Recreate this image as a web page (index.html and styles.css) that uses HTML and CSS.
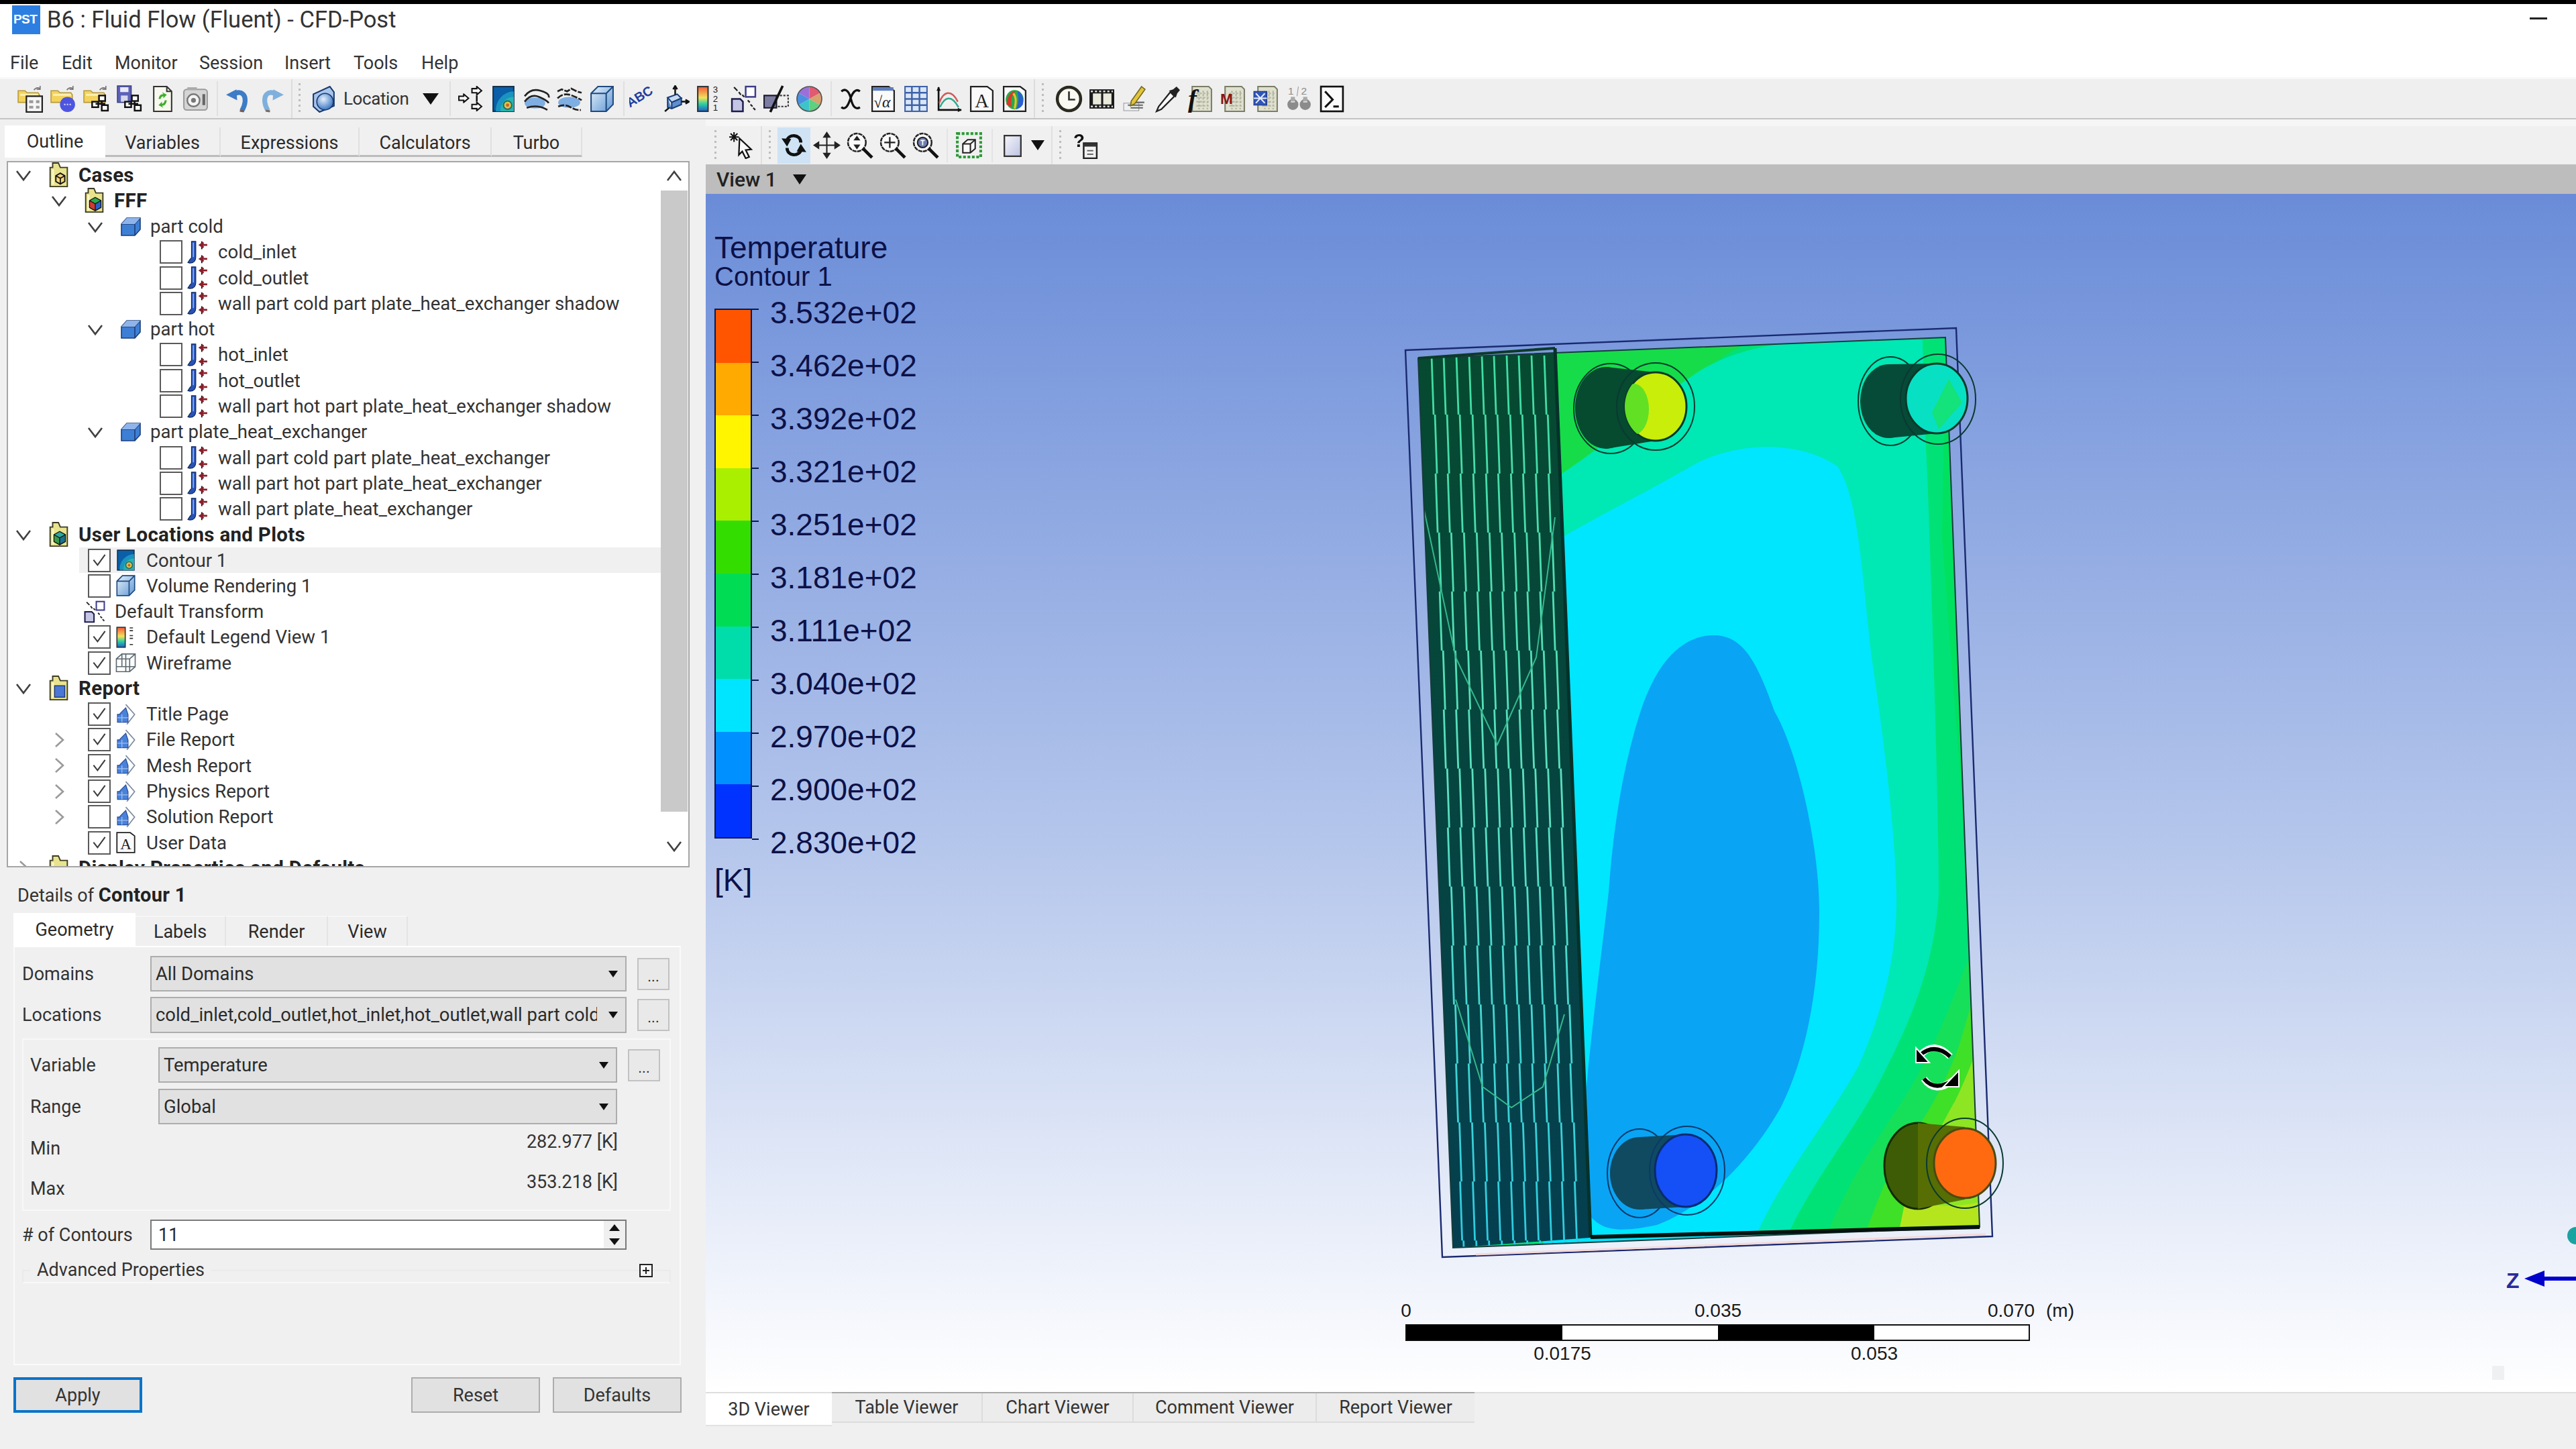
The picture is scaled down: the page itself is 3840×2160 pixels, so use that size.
FILE: index.html
```html
<!DOCTYPE html>
<html lang="en">
<head>
<meta charset="utf-8">
<title>B6 : Fluid Flow (Fluent) - CFD-Post</title>
<link rel="stylesheet" href="styles.css">
</head>
<body>
<svg class="sprite" xmlns="http://www.w3.org/2000/svg">
  <defs>
    <linearGradient id="gCube" x1="0" y1="0" x2="1" y2="1"><stop offset="0" stop-color="#e6f1fb"/><stop offset="1" stop-color="#5f97d3"/></linearGradient>
    <linearGradient id="gLeg" x1="0" y1="0" x2="0" y2="1"><stop offset="0" stop-color="#f25a3a"/><stop offset=".45" stop-color="#f4e05a"/><stop offset=".7" stop-color="#2fd0a0"/><stop offset="1" stop-color="#1a5fd0"/></linearGradient>
    <linearGradient id="gView" x1="0" y1="0" x2="1" y2="1"><stop offset="0" stop-color="#f6f6fb"/><stop offset="1" stop-color="#bcc3e2"/></linearGradient>
    <radialGradient id="gBall" cx=".4" cy=".35" r=".7"><stop offset="0" stop-color="#e5f0fc"/><stop offset="1" stop-color="#2f6ec0"/></radialGradient>
  </defs>
  <symbol id="folder" viewBox="0 0 40 40"><path d="M1 8h10l3 3h16l2 3v11H1z" fill="#f3d35c" stroke="#b79a38" stroke-width="1.5"/><path d="M4 14h26" stroke="#fbeeb0" stroke-width="3"/><path d="M24 7q4-5 9-2M33 1v5h-5" fill="none" stroke="#777" stroke-width="1.6"/></symbol>
  <symbol id="nodes" viewBox="0 0 40 40"><g fill="#fff" stroke="#111" stroke-width="2.4"><rect x="23" y="15" width="9" height="8"/><rect x="13" y="24" width="9" height="8"/><rect x="27" y="29" width="9" height="8"/><path d="M27 23v4h-9M27 27h4v2" fill="none"/></g></symbol>
  <symbol id="i-open" viewBox="0 0 40 40"><use href="#folder"/><rect x="13" y="16" width="23" height="23" fill="#f7f7f7" stroke="#222" stroke-width="2.2"/><path d="M17 22h6v4h-6zM27 22h5v4h-5zM17 30h6v4h-6zM27 30h5v4h-5z" fill="#9a9a9a"/></symbol>
  <symbol id="i-openb" viewBox="0 0 40 40"><use href="#folder"/><circle cx="25" cy="28" r="11" fill="#4d55e0"/><path d="M20 28h2M24 28h2M28 28h2" stroke="#dfe0ff" stroke-width="2"/></symbol>
  <symbol id="i-openn" viewBox="0 0 40 40"><use href="#folder"/><use href="#nodes"/></symbol>
  <symbol id="i-saven" viewBox="0 0 40 40"><rect x="2" y="1" width="20" height="24" fill="#5d62b8" stroke="#39407e" stroke-width="1.5"/><rect x="6" y="3" width="12" height="7" fill="#e9eaf8"/><rect x="7" y="15" width="10" height="9" fill="#d5d7ee"/><use href="#nodes"/></symbol>
  <symbol id="i-refresh" viewBox="0 0 40 40"><path d="M7 2h19l7 7v29H7z" fill="#f8f8ee" stroke="#333" stroke-width="2"/><path d="M26 2v7h7" fill="none" stroke="#333" stroke-width="2"/><path d="M14 20q1-7 7-7l-2-3 7 4-5 5v-3q-3 0-4 4zM26 22q-1 8-7 8l2 3-7-4 5-5v3q3 0 4-5z" fill="#3eae2e"/></symbol>
  <symbol id="i-cam" viewBox="0 0 40 40"><rect x="3" y="6" width="34" height="30" rx="4" fill="#d5d5d5" stroke="#9c9c9c" stroke-width="2"/><circle cx="17" cy="22" r="9" fill="#f4f4f4" stroke="#777" stroke-width="2.4"/><circle cx="17" cy="22" r="3.5" fill="#777"/><rect x="30" y="13" width="4" height="16" fill="#666"/><rect x="8" y="3" width="14" height="4" fill="#aaa"/></symbol>
  <symbol id="i-undo" viewBox="0 0 40 40"><path d="M12 14C26 4 36 18 25 37" fill="none" stroke="#3d7cc6" stroke-width="7"/><path d="M2 14l15-8 1 16z" fill="#3d7cc6"/><path d="M22 37l6 1" stroke="#7a5a50" stroke-width="3"/></symbol>
  <symbol id="i-redo" viewBox="0 0 40 40"><path d="M28 14C14 4 4 18 15 37" fill="none" stroke="#7fb0dc" stroke-width="7"/><path d="M38 14l-15-8-1 16z" fill="#7fb0dc"/><path d="M12 37l6 1" stroke="#7a6a60" stroke-width="3"/></symbol>
  <symbol id="i-loc" viewBox="0 0 40 40"><path d="M4 13L28 2l6 8v20L13 39 4 31z" fill="#a7c4ea" stroke="#17386e" stroke-width="2"/><circle cx="21" cy="24" r="12" fill="url(#gBall)" stroke="#17386e" stroke-width="1.5"/></symbol>
  <symbol id="arw" viewBox="0 0 16 14"><path d="M1 4h7V1l7 6-7 6v-3H1z" fill="#fff" stroke="#111" stroke-width="2"/></symbol>
  <symbol id="i-xf" viewBox="0 0 40 40"><use href="#arw" x="20" y="1" width="18" height="14"/><use href="#arw" x="1" y="12" width="18" height="14"/><use href="#arw" x="20" y="24" width="18" height="14"/><path d="M29 15v9" stroke="#111" stroke-width="2.4"/></symbol>
  <symbol id="i-contour" viewBox="0 0 40 40"><rect x="5" y="2" width="30" height="36" fill="#0a5fa8" stroke="#12304f" stroke-width="2"/><path d="M35 9A27 27 0 0 0 9 38h26z" fill="#1a93c0"/><path d="M35 17A19 19 0 0 0 16 38h19z" fill="#25b4b0"/><circle cx="26" cy="29" r="6" fill="#d8c84a" stroke="#2a6a6a" stroke-width="2"/><circle cx="26" cy="29" r="2.4" fill="#d0602a"/></symbol>
  <symbol id="i-stream" viewBox="0 0 40 40"><ellipse cx="18" cy="26" rx="15" ry="8" fill="#7eaee2"/><path d="M3 16Q12 4 26 8T38 18M3 24Q12 12 24 17T38 26M6 33Q14 30 22 31T36 36" fill="none" stroke="#222" stroke-width="2.6"/></symbol>
  <symbol id="i-stream2" viewBox="0 0 40 40"><ellipse cx="20" cy="25" rx="16" ry="8" fill="#7eaee2"/><path d="M3 9l6-3 8 3 6-4 8 4 7 2M3 19Q12 10 24 15T38 22M4 31Q14 27 22 32T37 36" fill="none" stroke="#222" stroke-width="2.6" stroke-dasharray="9 2"/></symbol>
  <symbol id="i-cube" viewBox="0 0 40 40"><path d="M4 12L14 2h22v26L26 38H4z" fill="url(#gCube)" stroke="#1d4a80" stroke-width="2"/><path d="M4 12h22v26M26 12L36 2" fill="none" stroke="#1d4a80" stroke-width="2"/></symbol>
  <symbol id="i-axisbox" viewBox="0 0 40 40"><path d="M8 18l14-5 6 6-14 6z" fill="#c7d9f2" stroke="#1a3f7a" stroke-width="2"/><path d="M8 18v14l6 2 14-6V19l-14 6v9" fill="#5f8fcc" stroke="#1a3f7a" stroke-width="2"/><path d="M19 14V2M16 6l3-5 3 5M28 24h10M34 21l5 3-5 3M10 33l-6 5" fill="none" stroke="#111" stroke-width="2.4"/></symbol>
  <symbol id="i-legbar" viewBox="0 0 40 40"><rect x="4" y="2" width="15" height="36" fill="url(#gLeg)" stroke="#333" stroke-width="2"/></symbol>
  <symbol id="i-transform" viewBox="0 0 40 40"><rect x="23" y="2" width="14" height="15" fill="#fff" stroke="#3c3c8a" stroke-width="2.4"/><path d="M3 20h12l4 4v14H3z" fill="#c5c5e4" stroke="#1c1c4c" stroke-width="2.4"/><path d="M6 3l5 5M13 10l3 4M18 14l3 3M26 22l3 3M30 28l3 3M34 33l3 3" stroke="#222" stroke-width="2.2"/></symbol>
  <symbol id="i-clip" viewBox="0 0 40 40"><path d="M2 15h18v18H2z" fill="#7d7da3" stroke="#1b1b30" stroke-width="2"/><path d="M20 15h17v16H20" fill="none" stroke="#333" stroke-width="2" stroke-dasharray="3 2"/><path d="M29 1L11 39" stroke="#111" stroke-width="3.6"/></symbol>
  <symbol id="i-wheel" viewBox="0 0 40 40"><path d="M20 20V2a18 18 0 0 1 16 9z" fill="#e05a70"/><path d="M20 20l16-9a18 18 0 0 1 0 18z" fill="#d9a070"/><path d="M20 20l16 9a18 18 0 0 1-16 9z" fill="#5fcf80"/><path d="M20 20v18a18 18 0 0 1-16-9z" fill="#3cc5c8"/><path d="M20 20L4 29a18 18 0 0 1 0-18z" fill="#4a90e0"/><path d="M20 20L4 11a18 18 0 0 1 16-9z" fill="#9a70d8"/><circle cx="20" cy="20" r="18" fill="none" stroke="#555" stroke-width="1.6"/></symbol>
  <symbol id="i-expr" viewBox="0 0 40 40"><path d="M7 9c7-6 12 2 14 11s6 17 13 12M34 9c-6-5-11 2-14 11S13 37 7 32" fill="none" stroke="#111" stroke-width="3.2"/></symbol>
  <symbol id="page" viewBox="0 0 40 40"><path d="M4 2h24l8 6v30H4z" fill="#fafafa" stroke="#222" stroke-width="2.2"/></symbol>
  <symbol id="i-table" viewBox="0 0 40 40"><rect x="4" y="2" width="32" height="36" fill="#d9e6f7" stroke="#3f62a8" stroke-width="2"/><path d="M14 2v36M25 2v36M4 11h32M4 20h32M4 29h32" stroke="#3f62a8" stroke-width="2.4"/></symbol>
  <symbol id="i-chart" viewBox="0 0 40 40"><path d="M5 3v33h33" fill="none" stroke="#111" stroke-width="2.6"/><path d="M2 8l3-6 3 6M33 33l6 3-6 3" fill="#111"/><path d="M6 26C12 8 24 6 33 24" fill="none" stroke="#d05a5a" stroke-width="2.4"/><path d="M7 32C14 16 24 14 34 32" fill="none" stroke="#2fa98e" stroke-width="2.4"/></symbol>
  <symbol id="i-rainbow" viewBox="0 0 40 40"><use href="#page"/><ellipse cx="20" cy="21" rx="13" ry="14" fill="#29a84a"/><path d="M8 28Q10 10 22 8q-10 10-6 24z" fill="#d83a2a"/><path d="M24 8q10 4 8 20-4 6-10 7 6-10 2-27z" fill="#2a5fd8"/><path d="M18 12q6 6 2 22" stroke="#e9c22a" stroke-width="3" fill="none"/></symbol>
  <symbol id="i-clock" viewBox="0 0 40 40"><circle cx="20" cy="20" r="17" fill="#fafaf2" stroke="#2a2a20" stroke-width="4.4"/><path d="M20 9v12h9" fill="none" stroke="#333" stroke-width="2.6"/></symbol>
  <symbol id="i-film" viewBox="0 0 40 40"><rect x="2" y="6" width="36" height="28" fill="#1a1a1a"/><rect x="7" y="12" width="12" height="16" fill="#e9e9dc"/><rect x="22" y="12" width="12" height="16" fill="#e9e9dc"/><path d="M4 9h32M4 31h32" stroke="#ddd" stroke-width="2.6" stroke-dasharray="3 3"/></symbol>
  <symbol id="i-pencil" viewBox="0 0 40 40"><path d="M4 26h22v11H4z" fill="#eef0f2" stroke="#999"/><path d="M10 29h22M14 33h18M14 25h20" stroke="#666" stroke-width="2"/><path d="M30 2l5 4-15 21-6 3 1-7z" fill="#e2c53a" stroke="#786a20" stroke-width="1.6"/></symbol>
  <symbol id="i-dropper" viewBox="0 0 40 40"><path d="M24 10l6 6L11 35l-7 3 3-7z" fill="#fafafa" stroke="#222" stroke-width="2.2"/><path d="M22 8l10 10 2-6 4-5-5-5-5 4z" fill="#222"/></symbol>
  <symbol id="sheet" viewBox="0 0 40 40"><path d="M8 2h24l4 4v32H8z" fill="#dfe0cf" stroke="#7b7d66" stroke-width="2"/><path d="M14 12h18M14 18h18M14 24h18M14 30h18M18 8v27M24 8v27M30 8v27" stroke="#b3b59e" stroke-width="2" stroke-dasharray="3 2"/></symbol>
  <symbol id="i-bsheet" viewBox="0 0 40 40"><use href="#sheet"/><rect x="2" y="9" width="19" height="20" fill="#2f56ba" stroke="#1b2f78"/><path d="M5 12l13 14M18 12L5 26M2 19h19" stroke="#e8ecfb" stroke-width="2"/></symbol>
  <symbol id="i-bino" viewBox="0 0 40 40"><path d="M19 2l-2 14" stroke="#999"/><circle cx="11" cy="28" r="8" fill="#8b8b8b"/><circle cx="29" cy="28" r="8" fill="#8b8b8b"/><path d="M8 24h6M26 24h6" stroke="#ddd" stroke-width="2"/><rect x="8" y="17" width="6" height="6" fill="#aaa"/><rect x="26" y="17" width="6" height="6" fill="#aaa"/></symbol>
  <symbol id="i-term" viewBox="0 0 40 40"><rect x="4" y="2" width="32" height="36" fill="#fafafa" stroke="#111" stroke-width="2.6"/><path d="M10 9l11 12-11 11" fill="none" stroke="#111" stroke-width="3"/><path d="M22 31h8" stroke="#111" stroke-width="3"/></symbol>
  <symbol id="i-pick" viewBox="0 0 40 40"><path d="M16 10l17 16-8 1 5 10-5 2-5-10-5 5z" fill="#fafafa" stroke="#111" stroke-width="2.2"/><path d="M8 1v14M1 8h14M3 3l10 10M13 3L3 13" stroke="#111" stroke-width="2"/></symbol>
  <symbol id="i-rotate" viewBox="0 0 40 40"><path d="M30 16C30 4 12 2 9 15M10 24c0 12 18 14 21 1" fill="none" stroke="#111" stroke-width="4.6"/><path d="M2 10l14 1-6 11zM38 30l-14-1 6-11z" fill="#111"/></symbol>
  <symbol id="i-pan" viewBox="0 0 40 40"><path d="M20 7v26M7 20h26" stroke="#222" stroke-width="2"/><path d="M20 0l6 9H14zM20 40l6-9H14zM0 20l9-6v12zM40 20l-9-6v12z" fill="#222"/></symbol>
  <symbol id="lens" viewBox="0 0 40 40"><circle cx="16" cy="16" r="13" fill="#fafafa" stroke="#222" stroke-width="2.4" stroke-dasharray="6 1"/><path d="M25 25l13 13" stroke="#111" stroke-width="4.6"/></symbol>
  <symbol id="i-zoomud" viewBox="0 0 40 40"><use href="#lens"/><path d="M16 6l5 7H11zM16 26l5-7H11z" fill="#222"/></symbol>
  <symbol id="i-zoomp" viewBox="0 0 40 40"><use href="#lens"/><path d="M16 8v16M8 16h16" stroke="#222" stroke-width="2.2"/></symbol>
  <symbol id="i-zoomt" viewBox="0 0 40 40"><use href="#lens"/><circle cx="16" cy="16" r="7.5" fill="#6f7fb4" stroke="#222" stroke-width="2"/><path d="M13 13h6M16 13v7" stroke="#fff" stroke-width="1.6"/></symbol>
  <symbol id="i-fit" viewBox="0 0 40 40"><rect x="3" y="3" width="34" height="34" fill="none" stroke="#2e9a3a" stroke-width="4" stroke-dasharray="4 2.4"/><path d="M11 18l7-6h11v13l-7 6H11z" fill="#fafafa" stroke="#222" stroke-width="2"/><path d="M11 18h11v13M22 18l7-6" fill="none" stroke="#222" stroke-width="2"/></symbol>
  <symbol id="i-view" viewBox="0 0 40 40"><rect x="8" y="6" width="24" height="30" fill="url(#gView)" stroke="#333" stroke-width="2.2"/></symbol>
  <symbol id="i-qbox" viewBox="0 0 40 40"><rect x="17" y="17" width="19" height="22" fill="#f2f2f2" stroke="#222" stroke-width="2.4"/><rect x="17" y="17" width="19" height="5" fill="#333"/><path d="M22 28h9M22 33h9" stroke="#555" stroke-width="1.8"/></symbol>
  <symbol id="t-folder" viewBox="0 0 34 40"><path d="M3 8h4V1h9l3 7h11v30H3z" fill="#e9e38e" stroke="#3b3b22" stroke-width="2"/><path d="M6 11h3v24H6z" fill="#fbf8c9"/></symbol>
  <symbol id="t-case" viewBox="0 0 34 40"><use href="#t-folder"/><path d="M12 21l7-4 7 4v9l-7 4-7-4z" fill="#f5d57a" stroke="#111" stroke-width="2"/><path d="M12 21l7 4 7-4M19 25v9" fill="none" stroke="#111" stroke-width="1.8"/></symbol>
  <symbol id="t-fff" viewBox="0 0 34 40"><use href="#t-folder"/><path d="M9 20l9-5 9 5-9 5z" fill="#2aa94a"/><path d="M9 20l9 5v11l-9-5z" fill="#d03a32"/><path d="M27 20l-9 5v11l9-5z" fill="#2a5fc8"/><path d="M9 20l9-5 9 5v11l-9 5-9-5zM9 20l9 5 9-5M18 25v11" fill="none" stroke="#111" stroke-width="1.4"/></symbol>
  <symbol id="t-ulp" viewBox="0 0 34 40"><use href="#t-folder"/><path d="M9 20l9-5 9 5-9 5z" fill="#2aa9a0"/><path d="M9 20l9 5v11l-9-5z" fill="#3a9a4a"/><path d="M27 20l-9 5v11l9-5z" fill="#1a6f90"/><path d="M9 20l9-5 9 5v11l-9 5-9-5zM9 20l9 5 9-5M18 25v11" fill="none" stroke="#111" stroke-width="1.4"/></symbol>
  <symbol id="t-rep" viewBox="0 0 34 40"><use href="#t-folder"/><rect x="10" y="16" width="16" height="18" fill="#4a78d4" stroke="#1d3a80" stroke-width="1.5"/></symbol>
  <symbol id="t-part" viewBox="0 0 30 30"><path d="M1 11l8-9h20v17l-8 9H1z" fill="#3e7fd6" stroke="#1c3e78" stroke-width="1.6"/><path d="M1 11h20v17M21 11l8-9" fill="none" stroke="#1c3e78" stroke-width="1.6"/><path d="M9 2h20l-8 9H1z" fill="#8fb4ea"/></symbol>
  <symbol id="t-bnd" viewBox="0 0 34 40"><path d="M7 2h7v26q0 10-10 10l-3-1 4-6q2 0 2-5z" fill="#2853b5" stroke="#14285c" stroke-width="1.4"/><path d="M10 4v24" stroke="#8ab0ec" stroke-width="2"/><path d="M24 2v13M24 25v13" stroke="#111" stroke-width="2"/><path d="M33 8H22M27 4l-6 4 6 4M33 31H22M27 27l-6 4 6 4" fill="none" stroke="#8a1f2a" stroke-width="3"/></symbol>
  <symbol id="t-wire" viewBox="0 0 40 40"><path d="M3 13L13 4h24v23l-10 9H3zM3 13h24v23M27 13L37 4M13 4v23H3M13 27h24M20 13v23M20 4v9" fill="none" stroke="#5d6a72" stroke-width="2"/></symbol>
  <symbol id="t-report" viewBox="0 0 40 40"><path d="M20 2l16 18-14 18" fill="#fff" stroke="#7a8aa0" stroke-width="2"/><path d="M10 18l10-10 4 12v14H5V20h4z" fill="#4a82da" stroke="#2a4f9c" stroke-width="1.6"/><path d="M5 26h19M13 20v14" stroke="#9ec0f0" stroke-width="1.6"/></symbol>
  <symbol id="t-check" viewBox="0 0 34 36"><path d="M7 17l7 9L27 8" fill="none" stroke="#3c3c3c" stroke-width="2.4"/></symbol>
  <symbol id="chev-d" viewBox="0 0 24 24"><path d="M2 6l10 13L22 6" fill="none" stroke="#404040" stroke-width="2.6"/></symbol>
  <symbol id="chev-u" viewBox="0 0 24 24"><path d="M2 18L12 5l10 13" fill="none" stroke="#404040" stroke-width="2.6"/></symbol>
  <symbol id="chev-r" viewBox="0 0 24 24"><path d="M7 2l11 10L7 22" fill="none" stroke="#9a9a9a" stroke-width="2.6"/></symbol>
</svg>

<div class="app">
  <div class="strip"></div>
  <header class="titlebar">
    <div class="titlerow">
      <div class="logo">PST</div>
      <div class="wintitle">B6 : Fluid Flow (Fluent) - CFD-Post</div>
      <div class="minimize"></div>
    </div>
    <nav class="menubar">
      <span>File</span><span>Edit</span><span>Monitor</span><span>Session</span><span>Insert</span><span>Tools</span><span>Help</span>
    </nav>
  </header>

  <div class="toolbar">
    <div class="tgroup g1">
      <i class="slot"><svg><use href="#i-open"/></svg></i>
      <i class="slot"><svg><use href="#i-openb"/></svg></i>
      <i class="slot"><svg><use href="#i-openn"/></svg></i>
      <i class="slot"><svg><use href="#i-saven"/></svg></i>
      <i class="slot"><svg><use href="#i-refresh"/></svg></i>
      <i class="slot"><svg><use href="#i-cam"/></svg></i>
      <b class="sep s1"></b>
      <i class="slot"><svg><use href="#i-undo"/></svg></i>
      <i class="slot"><svg><use href="#i-redo"/></svg></i>
    </div>
    <div class="tgroup g2">
      <b class="handle h2"></b>
      <i class="slot"><svg><use href="#i-loc"/></svg></i>
      <span class="loclabel">Location</span>
      <b class="tri big"></b>
      <b class="sep s2"></b>
      <i class="slot"><svg><use href="#i-xf"/></svg></i>
      <i class="slot"><svg><use href="#i-contour"/></svg></i>
      <i class="slot"><svg><use href="#i-stream"/></svg></i>
      <i class="slot"><svg><use href="#i-stream2"/></svg></i>
      <i class="slot"><svg><use href="#i-cube"/></svg></i>
      <b class="sep s3"></b>
      <i class="slot"><svg viewBox="0 0 40 40"><text x="1" y="33" transform="rotate(-32 1 33)" class="svg-abc">ABC</text></svg></i>
      <i class="slot"><svg><use href="#i-axisbox"/></svg></i>
      <i class="slot"><svg viewBox="0 0 40 40"><use href="#i-legbar"/><text x="26" y="11" class="svg-num">3</text><text x="26" y="24" class="svg-num">2</text><text x="26" y="37" class="svg-num">1</text></svg></i>
      <i class="slot w3"><svg><use href="#i-transform"/></svg></i>
      <i class="slot"><svg><use href="#i-clip"/></svg></i>
      <i class="slot"><svg><use href="#i-wheel"/></svg></i>
      <b class="sep s4"></b>
      <i class="slot"><svg><use href="#i-expr"/></svg></i>
      <i class="slot"><svg viewBox="0 0 40 40"><use href="#page"/><rect x="5" y="3" width="30" height="5" fill="#5d7dbd"/><text x="6" y="32" class="svg-ital">√α</text></svg></i>
      <i class="slot"><svg><use href="#i-table"/></svg></i>
      <i class="slot"><svg><use href="#i-chart"/></svg></i>
      <i class="slot"><svg viewBox="0 0 40 40"><use href="#page"/><text x="20" y="32" class="svg-a">A</text></svg></i>
      <i class="slot"><svg><use href="#i-rainbow"/></svg></i>
    </div>
    <div class="tgroup g3">
      <b class="handle h3"></b>
      <i class="slot"><svg><use href="#i-clock"/></svg></i>
      <i class="slot"><svg><use href="#i-film"/></svg></i>
      <i class="slot"><svg><use href="#i-pencil"/></svg></i>
      <i class="slot"><svg><use href="#i-dropper"/></svg></i>
      <i class="slot"><svg viewBox="0 0 40 40"><use href="#sheet"/><text x="2" y="32" class="svg-f">f</text></svg></i>
      <i class="slot"><svg viewBox="0 0 40 40"><use href="#sheet"/><text x="1" y="27" class="svg-m">M</text></svg></i>
      <i class="slot"><svg><use href="#i-bsheet"/></svg></i>
      <i class="slot"><svg viewBox="0 0 40 40"><use href="#i-bino"/><text x="4" y="14" class="svg-num g">1</text><text x="23" y="14" class="svg-num g">2</text></svg></i>
      <i class="slot"><svg><use href="#i-term"/></svg></i>
    </div>
  </div>

  <main class="workspace">
    <aside class="left">
      <div class="ltabs">
        <span class="ltab on t1">Outline</span><span class="ltab t2">Variables</span><span class="ltab t3">Expressions</span><span class="ltab t4">Calculators</span><span class="ltab t5">Turbo</span>
      </div>
      <div class="treebox">
        <div class="tree">
          <div class="row r0"><svg class="ch"><use href="#chev-d"/></svg><svg class="fo"><use href="#t-case"/></svg><b>Cases</b></div>
          <div class="row r1"><svg class="ch"><use href="#chev-d"/></svg><svg class="fo"><use href="#t-fff"/></svg><b>FFF</b></div>
          <div class="row r2"><svg class="ch"><use href="#chev-d"/></svg><svg class="pa"><use href="#t-part"/></svg><span>part cold</span></div>
          <div class="row r3"><u class="ch"></u><em class="cb"></em><svg class="it"><use href="#t-bnd"/></svg><span>cold_inlet</span></div>
          <div class="row r3"><u class="ch"></u><em class="cb"></em><svg class="it"><use href="#t-bnd"/></svg><span>cold_outlet</span></div>
          <div class="row r3"><u class="ch"></u><em class="cb"></em><svg class="it"><use href="#t-bnd"/></svg><span>wall part cold part plate_heat_exchanger shadow</span></div>
          <div class="row r2"><svg class="ch"><use href="#chev-d"/></svg><svg class="pa"><use href="#t-part"/></svg><span>part hot</span></div>
          <div class="row r3"><u class="ch"></u><em class="cb"></em><svg class="it"><use href="#t-bnd"/></svg><span>hot_inlet</span></div>
          <div class="row r3"><u class="ch"></u><em class="cb"></em><svg class="it"><use href="#t-bnd"/></svg><span>hot_outlet</span></div>
          <div class="row r3"><u class="ch"></u><em class="cb"></em><svg class="it"><use href="#t-bnd"/></svg><span>wall part hot part plate_heat_exchanger shadow</span></div>
          <div class="row r2"><svg class="ch"><use href="#chev-d"/></svg><svg class="pa"><use href="#t-part"/></svg><span>part plate_heat_exchanger</span></div>
          <div class="row r3"><u class="ch"></u><em class="cb"></em><svg class="it"><use href="#t-bnd"/></svg><span>wall part cold part plate_heat_exchanger</span></div>
          <div class="row r3"><u class="ch"></u><em class="cb"></em><svg class="it"><use href="#t-bnd"/></svg><span>wall part hot part plate_heat_exchanger</span></div>
          <div class="row r3"><u class="ch"></u><em class="cb"></em><svg class="it"><use href="#t-bnd"/></svg><span>wall part plate_heat_exchanger</span></div>
          <div class="row r0"><svg class="ch"><use href="#chev-d"/></svg><svg class="fo"><use href="#t-ulp"/></svg><b>User Locations and Plots</b></div>
          <div class="row r1 sel"><u class="ch"></u><em class="cb"><svg><use href="#t-check"/></svg></em><svg class="it"><use href="#i-contour"/></svg><span>Contour 1</span></div>
          <div class="row r1"><u class="ch"></u><em class="cb"></em><svg class="it"><use href="#i-cube"/></svg><span>Volume Rendering 1</span></div>
          <div class="row r1"><u class="ch"></u><svg class="tf"><use href="#i-transform"/></svg><span>Default Transform</span></div>
          <div class="row r1"><u class="ch"></u><em class="cb"><svg><use href="#t-check"/></svg></em><svg class="it" viewBox="0 0 40 40"><use href="#i-legbar"/><path d="M27 3h6M27 8h6M27 17h6M27 22h6M27 33h6" stroke="#333" stroke-width="2"/></svg><span>Default Legend View 1</span></div>
          <div class="row r1"><u class="ch"></u><em class="cb"><svg><use href="#t-check"/></svg></em><svg class="it"><use href="#t-wire"/></svg><span>Wireframe</span></div>
          <div class="row r0"><svg class="ch"><use href="#chev-d"/></svg><svg class="fo"><use href="#t-rep"/></svg><b>Report</b></div>
          <div class="row r1"><u class="ch"></u><em class="cb"><svg><use href="#t-check"/></svg></em><svg class="it"><use href="#t-report"/></svg><span>Title Page</span></div>
          <div class="row r1"><svg class="ch"><use href="#chev-r"/></svg><em class="cb"><svg><use href="#t-check"/></svg></em><svg class="it"><use href="#t-report"/></svg><span>File Report</span></div>
          <div class="row r1"><svg class="ch"><use href="#chev-r"/></svg><em class="cb"><svg><use href="#t-check"/></svg></em><svg class="it"><use href="#t-report"/></svg><span>Mesh Report</span></div>
          <div class="row r1"><svg class="ch"><use href="#chev-r"/></svg><em class="cb"><svg><use href="#t-check"/></svg></em><svg class="it"><use href="#t-report"/></svg><span>Physics Report</span></div>
          <div class="row r1"><svg class="ch"><use href="#chev-r"/></svg><em class="cb"></em><svg class="it"><use href="#t-report"/></svg><span>Solution Report</span></div>
          <div class="row r1"><u class="ch"></u><em class="cb"><svg><use href="#t-check"/></svg></em><svg class="it" viewBox="0 0 40 40"><use href="#page"/><text x="20" y="32" class="svg-a">A</text></svg><span>User Data</span></div>
          <div class="row r0"><svg class="ch"><use href="#chev-r"/></svg><svg class="fo"><use href="#t-folder"/></svg><b>Display Properties and Defaults</b></div>
        </div>
        <div class="vscroll">
          <svg class="sarrow"><use href="#chev-u"/></svg>
          <div class="thumb"></div>
          <svg class="sarrow"><use href="#chev-d"/></svg>
        </div>
      </div>

      <section class="details">
        <div class="dhead">Details of <b>Contour 1</b></div>
        <div class="dtabs">
          <span class="dtab on d1">Geometry</span><span class="dtab d2">Labels</span><span class="dtab d3">Render</span><span class="dtab d4">View</span>
        </div>
        <div class="dpanel">
          <div class="frow f1">
            <label>Domains</label>
            <div class="combo wide"><span>All Domains</span><b class="tri"></b></div>
            <div class="dots">...</div>
          </div>
          <div class="frow f2">
            <label>Locations</label>
            <div class="combo wide"><span>cold_inlet,cold_outlet,hot_inlet,hot_outlet,wall part cold</span><b class="tri"></b></div>
            <div class="dots">...</div>
          </div>
          <div class="group">
            <div class="frow in">
              <label>Variable</label>
              <div class="combo"><span>Temperature</span><b class="tri"></b></div>
              <div class="dots">...</div>
            </div>
            <div class="frow in r2nd">
              <label>Range</label>
              <div class="combo"><span>Global</span><b class="tri"></b></div>
            </div>
            <div class="frow in minmax first">
              <label>Min</label><span class="val">282.977 [K]</span>
            </div>
            <div class="frow in minmax">
              <label>Max</label><span class="val">353.218 [K]</span>
            </div>
          </div>
          <div class="frow f3">
            <label># of Contours</label>
            <div class="spin"><span>11</span><div class="spinbtns"><b class="up"></b><b class="down"></b></div></div>
          </div>
          <div class="advanced">
            <span class="advtitle">Advanced Properties</span>
            <span class="advplus"></span>
          </div>
        </div>
        <div class="buttons">
          <button class="btn apply">Apply</button>
          <button class="btn reset">Reset</button>
          <button class="btn defaults">Defaults</button>
        </div>
      </section>
    </aside>

    <section class="right">
      <div class="vtoolbar">
        <b class="handle h4"></b>
        <i class="slot p1"><svg><use href="#i-pick"/></svg></i>
        <b class="sep s5"></b>
        <b class="handle h5"></b>
        <i class="slot active"><svg><use href="#i-rotate"/></svg></i>
        <i class="slot"><svg><use href="#i-pan"/></svg></i>
        <i class="slot"><svg><use href="#i-zoomud"/></svg></i>
        <i class="slot"><svg><use href="#i-zoomp"/></svg></i>
        <i class="slot"><svg><use href="#i-zoomt"/></svg></i>
        <b class="sep s6"></b>
        <i class="slot p2"><svg><use href="#i-fit"/></svg></i>
        <b class="sep s7"></b>
        <i class="slot p3"><svg><use href="#i-view"/></svg></i>
        <b class="tri mid"></b>
        <b class="sep s8"></b>
        <b class="handle h6"></b>
        <i class="slot p4"><svg viewBox="0 0 40 40"><use href="#i-qbox"/><text x="2" y="22" class="svg-q">?</text></svg></i>
      </div>
      <div class="viewbar"><span>View 1</span><b class="tri mid2"></b></div>
      <div class="viewer">
        <svg class="model" viewBox="1052 289 2788 1786" xmlns="http://www.w3.org/2000/svg">
          <defs>
            <clipPath id="cpPlate"><polygon points="2114,534 2900,503 2951,1829 2166,1860"/></clipPath>
            <clipPath id="cpYellow"><ellipse cx="2468" cy="606" rx="46" ry="51"/></clipPath>
            <clipPath id="cpTeal"><ellipse cx="2887" cy="594" rx="46" ry="52"/></clipPath>
            <linearGradient id="gBand" x1="0" y1="0" x2="0" y2="1"><stop offset="0" stop-color="#064a30"/><stop offset="1" stop-color="#053f50"/></linearGradient>
            <linearGradient id="gStripe" gradientUnits="userSpaceOnUse" x1="0" y1="520" x2="0" y2="1860"><stop offset="0" stop-color="#3fdca0"/><stop offset=".5" stop-color="#5ce0c0"/><stop offset="1" stop-color="#2ccbe0"/></linearGradient>
          </defs>
          <g clip-path="url(#cpPlate)">
            <rect x="2100" y="490" width="870" height="1380" fill="#00e276"/>
            <path d="M2310 510L2620 505C2540 540 2490 590 2470 640C2430 680 2370 710 2320 740Z" fill="#16dc4a"/>
            <path d="M2945 500L2900 500L2895 800L2925 1200L2940 1500L2960 1500Z" fill="#00e160"/>
            <path d="M2322 710C2400 660 2460 600 2535 552C2580 525 2640 510 2700 510L2866 506C2868 600 2870 650 2873 705C2880 900 2890 1200 2890 1334C2885 1420 2860 1500 2808 1600C2770 1680 2700 1760 2661 1850L2300 1870Z" fill="#00e8b4"/>
            <path d="M2330 800C2400 760 2470 725 2530 690C2590 660 2680 655 2739 695C2770 740 2775 850 2790 980C2805 1080 2825 1230 2827 1334C2828 1420 2810 1500 2770 1590C2720 1680 2650 1760 2610 1860L2300 1870Z" fill="#00e6ff"/>
            <path d="M2555 947C2500 947 2465 1000 2445 1062C2420 1140 2405 1230 2398 1330C2385 1440 2372 1540 2365 1620L2368 1810C2390 1838 2420 1836 2470 1826C2540 1800 2610 1730 2655 1650C2690 1580 2712 1480 2712 1360C2712 1260 2680 1120 2645 1060C2620 990 2600 947 2555 947Z" fill="#0aa4f5"/>
            <path d="M2960 1330C2950 1380 2940 1420 2930 1440C2900 1520 2870 1590 2830 1650C2790 1710 2750 1770 2720 1850L2960 1840Z" fill="#16e05a"/>
            <path d="M2960 1400C2950 1460 2935 1510 2920 1560C2890 1640 2860 1680 2830 1720C2810 1760 2795 1800 2780 1840L2960 1840Z" fill="#3fe028"/>
            <path d="M2960 1530C2945 1570 2930 1610 2915 1640C2880 1700 2850 1770 2840 1840L2960 1840Z" fill="#8ee524"/>
            <path d="M2960 1790C2920 1800 2890 1800 2840 1790L2830 1840L2960 1840Z" fill="#b5e61d"/>
            <polygon points="2114,534 2318,519 2371,1845 2166,1860" fill="url(#gBand)"/>
            <g stroke="url(#gStripe)" stroke-width="2.8" fill="none" stroke-dasharray="88 88">
              <path d="M2134 530L2180 1860M2152 530L2199 1860M2171 530L2218 1860M2190 530L2237 1860M2209 530L2256 1860M2227 530L2275 1860M2246 530L2294 1860M2264 530L2313 1860M2283 530L2332 1860M2302 530L2351 1860"/>
            </g>
            <g stroke="url(#gStripe)" stroke-width="2.8" fill="none" stroke-dasharray="88 88" stroke-dashoffset="88">
              <path d="M2136 530L2182 1860M2154 530L2201 1860M2173 530L2220 1860M2192 530L2239 1860M2211 530L2258 1860M2229 530L2277 1860M2248 530L2296 1860M2266 530L2315 1860M2285 530L2334 1860M2304 530L2353 1860"/>
            </g>
            <path d="M2123 761L2170 980L2232 1110L2290 980L2318 771M2170 1490L2210 1620L2253 1651L2300 1620L2332 1512" fill="none" stroke="#34b88c" stroke-width="2"/>
          </g>
          <polygon class="wire" points="2095,522 2916,489 2970,1843 2150,1874"/>
          <path class="wire thin" d="M2114 534L2900 503L2951 1829L2166 1860Z"/>
          <path d="M2114 534L2318 519" stroke="#0c3a2a" stroke-width="4" fill="none"/>
          <path d="M2318 519L2371 1845" stroke="#06322a" stroke-width="5" fill="none"/>
          <path d="M2371 1844L2951 1829" stroke="#03120e" stroke-width="6" fill="none"/>
          <path d="M2200 1870L2960 1840" stroke="#f4d8d8" stroke-width="3" fill="none"/>

          <ellipse class="wire cyl" cx="2401" cy="609" rx="55" ry="67"/>
          <ellipse cx="2394" cy="608" rx="46" ry="61" fill="#064a30"/>
          <path d="M2394 547L2468 555L2468 657L2394 669Z" fill="#064a30"/>
          <ellipse cx="2468" cy="606" rx="46" ry="51" fill="#c9ee0a" stroke="#0a3a2a" stroke-width="3"/>
          <ellipse cx="2436" cy="610" rx="22" ry="38" fill="#62e024" clip-path="url(#cpYellow)"/>
          <ellipse class="wire cyl" cx="2468" cy="606" rx="58" ry="65"/>
          <ellipse class="wire cyl" cx="2818" cy="598" rx="48" ry="66"/>
          <ellipse cx="2815" cy="598" rx="42" ry="55" fill="#064a38"/>
          <path d="M2815 543L2887 542L2887 646L2815 653Z" fill="#064a38"/>
          <ellipse cx="2887" cy="594" rx="46" ry="52" fill="#08e0c4" stroke="#0a3a2a" stroke-width="3"/>
          <path d="M2905 565L2925 600L2890 640L2880 615Z" fill="#14e27a" clip-path="url(#cpTeal)"/>
          <ellipse class="wire cyl" cx="2889" cy="595" rx="56" ry="67"/>
          <ellipse class="wire cyl blue" cx="2444" cy="1749" rx="48" ry="66"/>
          <ellipse cx="2444" cy="1749" rx="44" ry="54" fill="#0f4a60"/>
          <path d="M2444 1695L2513 1691L2513 1799L2444 1803Z" fill="#0f4a60"/>
          <ellipse cx="2513" cy="1745" rx="46" ry="54" fill="#1450f5" stroke="#0b2a70" stroke-width="3"/>
          <ellipse class="wire cyl blue" cx="2515" cy="1745" rx="56" ry="66"/>
          <ellipse cx="2859" cy="1738" rx="50" ry="64" fill="#3e5c06" stroke="#122a06" stroke-width="3"/>
          <path d="M2859 1674L2929 1680L2929 1788L2859 1802Z" fill="#566e04"/>
          <ellipse cx="2929" cy="1734" rx="46" ry="52" fill="#ff6a10" stroke="#4a4a10" stroke-width="3"/>
          <ellipse class="wire cyl" cx="2929" cy="1734" rx="57" ry="67"/>

          <g class="curs">
            <path d="M2907 1575Q2884 1550 2862 1573M2868 1608Q2884 1632 2912 1610" fill="none" stroke="#fff" stroke-width="10"/>
            <path d="M2907 1575Q2884 1554 2862 1573M2868 1608Q2884 1628 2912 1610" fill="none" stroke="#000" stroke-width="6"/>
            <path d="M2856 1562L2876 1584H2856ZM2920 1596V1620H2897Z" fill="#000" stroke="#fff" stroke-width="2"/>
          </g>

          <rect x="2096" y="1975" width="929" height="23" fill="#fff" stroke="#111" stroke-width="2"/>
          <rect x="2096" y="1975" width="233" height="23" fill="#000"/>
          <rect x="2561" y="1975" width="233" height="23" fill="#000"/>
          <text class="sc" x="2096" y="1963" text-anchor="middle">0</text>
          <text class="sc" x="2561" y="1963" text-anchor="middle">0.035</text>
          <text class="sc" x="2998" y="1963" text-anchor="middle">0.070</text>
          <text class="sc" x="3050" y="1963">(m)</text>
          <text class="sc" x="2329" y="2027" text-anchor="middle">0.0175</text>
          <text class="sc" x="2794" y="2027" text-anchor="middle">0.053</text>

          <text class="ax" x="3736" y="1920">Z</text>
          <path d="M3763 1906L3793 1894V1903H3840V1909H3793V1918Z" fill="#0000cc"/>
          <circle cx="3840" cy="1842" r="13" fill="#1aa3a0"/>
          <rect x="3715" y="2036" width="18" height="21" fill="#eef0f2"/>
        </svg>

        <div class="legend">
          <div class="ltitle">Temperature</div>
          <div class="lsub">Contour 1</div>
          <div class="lbody">
            <div class="lcol">
              <div class="lbar">
                <div class="seg c1"></div><div class="seg c2"></div><div class="seg c3"></div><div class="seg c4"></div><div class="seg c5"></div>
                <div class="seg c6"></div><div class="seg c7"></div><div class="seg c8"></div><div class="seg c9"></div><div class="seg c10"></div>
              </div>
              <div class="lunit">[K]</div>
            </div>
            <div class="lvals">
              <div>3.532e+02</div><div>3.462e+02</div><div>3.392e+02</div><div>3.321e+02</div><div>3.251e+02</div><div>3.181e+02</div>
              <div>3.111e+02</div><div>3.040e+02</div><div>2.970e+02</div><div>2.900e+02</div><div>2.830e+02</div>
            </div>
          </div>
        </div>
      </div>
      <div class="vtabs">
        <span class="vtab on v1">3D Viewer</span><span class="vtab v2">Table Viewer</span><span class="vtab v3">Chart Viewer</span><span class="vtab v4">Comment Viewer</span><span class="vtab v5">Report Viewer</span>
      </div>
    </section>
  </main>
</div>
</body>
</html>
```
FILE: styles.css
```css
* { box-sizing: border-box; }
html, body { margin: 0; padding: 0; }
body { width: 3840px; height: 2160px; overflow: hidden; background: #f0f0f0; font-family: Roboto, "Liberation Sans", sans-serif; font-size: 27px; color: #2b2b2b; }
.sprite { position: absolute; width: 0; height: 0; }
.svg-abc { font: bold 19px "Liberation Sans", sans-serif; fill: #1f3f9f; }
.svg-num { font: 13px "Liberation Sans", sans-serif; fill: #222; }
.svg-num.g { font-size: 15px; fill: #8a8a8a; }
.svg-ital { font: italic 23px "Liberation Serif", serif; fill: #222; }
.svg-a { font: 28px "Liberation Serif", serif; fill: #222; text-anchor: middle; }
.svg-f { font: italic bold 38px "Liberation Serif", serif; fill: #111; }
.svg-m { font: bold 22px "Liberation Sans", sans-serif; fill: #8a1414; }
.svg-q { font: bold 27px "Liberation Sans", sans-serif; fill: #111; }

.app { width: 3840px; height: 2160px; display: flex; flex-direction: column; filter: blur(0.5px); }
.strip { height: 6px; background: #000; flex: none; }

.titlebar { height: 109px; background: #fff; flex: none; display: flex; flex-direction: column; }
.titlerow { height: 44px; display: flex; align-items: center; padding-left: 18px; position: relative; margin-top: 1px; }
.logo { width: 42px; height: 43px; background: #2c7fe0; color: #fff; font: bold 19px "Liberation Sans", sans-serif; letter-spacing: -0.6px; padding: 10px 0 0 2px; flex: none; overflow: hidden; }
.wintitle { margin-left: 10px; font-size: 34.5px; color: #333; white-space: nowrap; }
.minimize { position: absolute; right: 43px; top: 19px; width: 26px; height: 3px; background: #222; }
.menubar { display: flex; margin-top: 29px; height: 28px; align-items: center; font-size: 27px; color: #333; }
.menubar span:nth-child(1) { margin-left: 15px; width: 77px; }
.menubar span:nth-child(2) { width: 79px; }
.menubar span:nth-child(3) { width: 126px; }
.menubar span:nth-child(4) { width: 127px; }
.menubar span:nth-child(5) { width: 103px; }
.menubar span:nth-child(6) { width: 101px; }

.toolbar { height: 63px; flex: none; background: #efefef; border-top: 3px solid #f8f8f8; border-bottom: 2px solid #c4c4c4; display: flex; }
.tgroup { display: flex; align-items: center; height: 100%; }
.g1 { width: 436px; padding-left: 22px; border-right: 2px solid #dcdcdc; }
.g2 { width: 1107px; border-right: 2px solid #dcdcdc; }
.g3 { flex: 1; }
.slot { width: 49px; height: 49px; flex: none; display: flex; align-items: center; justify-content: center; }
.slot svg { width: 41px; height: 41px; display: block; }
.w3 { margin-left: 3px; }
.sep { flex: none; width: 2px; height: 52px; background: #e0e0e0; display: block; }
.s1 { margin: 0 6px 0 7px; }
.s2 { margin: 0 5px 0 16px; }
.s3 { margin: 0 3px 0 7px; }
.s4 { margin: 0 3px 0 7px; }
.handle { flex: none; width: 3px; height: 46px; display: block; background-image: repeating-linear-gradient(to bottom, #bdbdbd 0 3px, transparent 3px 8px); }
.h2 { margin: 0 11px 0 9px; }
.h3 { margin: 0 13px 0 10px; }
.loclabel { margin-left: 4px; width: 118px; font-size: 26px; letter-spacing: -0.4px; color: #333; }
.tri { display: block; flex: none; width: 0; height: 0; border-style: solid; border-color: #111 transparent transparent; }
.tri.big { border-width: 17px 12px 0; }

.workspace { flex: 1; display: flex; min-height: 0; }

.left { width: 1052px; flex: none; display: flex; flex-direction: column; background: #f0f0f0; padding-top: 9px; }
.ltabs { display: flex; height: 48px; margin-left: 7px; align-items: flex-end; }
.ltab { height: 44px; display: flex; align-items: center; justify-content: center; border-right: 2px solid #e0e0e0; border-bottom: 3px solid #bcbcbc; margin-bottom: 1px; background: #f0f0f0; padding-top: 4px; }
.ltab.on { height: 48px; background: #fff; border: 0; margin-bottom: 0; padding-top: 0; }
.t1 { width: 150px; } .t2 { width: 172px; } .t3 { width: 207px; } .t4 { width: 197px; } .t5 { width: 135px; }
.treebox { margin: 5px 0 0 10px; width: 1018px; height: 1053px; flex: none; background: #fff; border: 2px solid #a6a6a6; display: flex; overflow: hidden; }
.tree { flex: none; width: 973px; height: 100%; overflow: hidden; }
.row { height: 38.27px; display: flex; align-items: center; white-space: nowrap; color: #333; font-size: 27.6px; }
.row b { color: #222; font-weight: 700; font-size: 29.5px; letter-spacing: 0.3px; }
.r0 { padding-left: 11px; } .r1 { padding-left: 64px; } .r2 { padding-left: 118px; } .r3 { padding-left: 171px; }
.ch { width: 24px; height: 24px; flex: none; display: block; }
.fo { width: 34px; height: 38px; margin-left: 24px; margin-right: 12px; flex: none; }
.pa { width: 30px; height: 30px; margin-left: 26px; margin-right: 14px; flex: none; }
.cb { width: 34px; height: 35px; margin-left: 31px; border: 2px solid #5a5a5a; background: #fff; flex: none; display: block; }
.cb svg { width: 100%; height: 100%; display: block; }
.it { width: 33px; height: 36px; margin-left: 6px; margin-right: 14px; flex: none; }
.tf { width: 34px; height: 36px; margin-left: 24px; margin-right: 13px; flex: none; }
.sel { background: linear-gradient(to right, transparent 106px, #f0f0f0 106px); }
.vscroll { flex: 1; display: flex; flex-direction: column; align-items: center; padding: 0 3px 0 0; }
.sarrow { width: 24px; height: 24px; flex: none; margin: 9px 0; display: block; }
.thumb { width: 40px; height: 926px; background: #c9c9c9; margin-bottom: 30px; }

.details { flex: 1; margin: 0 22px 0 5px; position: relative; }
.dhead { padding: 24px 0 0 21px; height: 58px; line-height: 34px; color: #333; }
.dhead b { color: #222; font-size: 29px; letter-spacing: 0.3px; }
.dtabs { display: flex; margin: 10px 0 0 15px; height: 49px; align-items: flex-end; }
.dtab { height: 45px; display: flex; align-items: center; justify-content: center; border-right: 2px solid #e4e4e4; border-top: 2px solid #f6f6f6; }
.dtab.on { height: 49px; background: #fff; border: 0; }
.d1 { width: 182px; } .d2 { width: 135px; } .d3 { width: 152px; } .d4 { width: 119px; }
.dpanel { margin-left: 15px; width: 995px; height: 625px; border: 2px solid #fafafa; border-top-color: #fff; padding-top: 13px; }
.frow { display: flex; align-items: center; height: 53px; padding-left: 11px; }
.frow label { width: 191px; flex: none; color: #333; }
.f2 { margin-top: 8px; height: 54px; }
.combo { height: 100%; background: #e1e1e1; border: 2px solid #adadad; display: flex; align-items: center; padding-left: 6px; position: relative; flex: none; width: 684px; overflow: hidden; white-space: nowrap; font-size: 27.4px; }
.combo.wide { width: 710px; }
.combo span { display: block; width: calc(100% - 42px); overflow: hidden; }
.combo .tri { position: absolute; right: 11px; top: 50%; margin-top: -5px; border-width: 10px 7px 0; }
.dots { width: 48px; height: 48px; margin-left: 16px; flex: none; background: #e9e9e9; border: 2px solid #c2c2c2; text-align: center; line-height: 44px; font-size: 22px; padding-top: 4px; }
.group { margin: 8px 0 0 11px; width: 967px; height: 257px; border: 2px solid #f8f8f8; padding-top: 11px; }
.frow.in { padding-left: 10px; }
.r2nd { margin-top: 9px; }
.minmax { height: 60px; justify-content: space-between; width: 886px; position: relative; top: 2px; }
.minmax.first { margin-top: 4px; }
.val { margin-bottom: 20px; color: #333; }
.f3 { margin-top: 13px; height: 45px; }
.spin { width: 710px; height: 45px; background: #fff; border: 2px solid #7a7a7a; padding-left: 10px; display: flex; align-items: center; justify-content: space-between; flex: none; }
.spinbtns { width: 32px; height: 100%; background: #efefef; display: flex; flex-direction: column; align-items: center; justify-content: space-around; }
.up, .down { display: block; width: 0; height: 0; border-style: solid; border-color: transparent; }
.up { border-width: 0 8px 10px; border-bottom-color: #111; }
.down { border-width: 10px 8px 0; border-top-color: #111; }
.advanced { position: relative; margin: 30px 0 0 11px; width: 967px; height: 20px; border: 2px solid #eaeaea; border-bottom-color: #f8f8f8; }
.advtitle { position: absolute; left: 10px; top: -18px; padding: 0 10px; line-height: 32px; background: #f0f0f0; color: #333; }
.advplus { position: absolute; right: 25px; top: -11px; width: 20px; height: 20px; border: 2px solid #222; background: linear-gradient(#222,#222) center/10px 2px no-repeat, linear-gradient(#222,#222) center/2px 10px no-repeat, #f6f6f6; }
.buttons { display: flex; margin: 18px 0 0 15px; height: 53px; }
.btn { height: 53px; width: 192px; font: inherit; color: #333; background: #e1e1e1; border: 2px solid #adadad; padding: 0; }
.apply { border: 4px solid #0a74c9; }
.reset { margin-left: 401px; }
.defaults { margin-left: 19px; }

.right { flex: 1; display: flex; flex-direction: column; min-width: 0; }
.vtoolbar { height: 67px; padding-top: 10px; flex: none; background: linear-gradient(#f6f6f6 10px, #f0f0f0 10px); display: flex; align-items: center; }
.h4 { margin: 0 0 0 13px; }
.p1 { margin-left: 14px; }
.s5 { margin: 0 10px 0 3px; height: 57px; }
.h5 { margin: 0 10px 0 0; }
.active { background: #cfe3f5; height: 54px; }
.s6 { margin: 0 0 0 7px; height: 50px; background: #e4e4e4; }
.p2 { margin-left: 7px; }
.s7 { margin: 0 0 0 9px; height: 50px; background: #e4e4e4; }
.p3 { margin-left: 4.5px; }
.tri.mid { margin-left: 3.5px; border-width: 15px 10px 0; }
.s8 { margin: 0 10px 0 10px; height: 57px; }
.h6 { margin: 0; }
.p4 { margin-left: 12px; }
.viewbar { height: 44px; flex: none; background: #bdbdbd; display: flex; align-items: center; padding-left: 16px; font-size: 30px; font-weight: 500; color: #222; }
.tri.mid2 { margin-left: 24px; border-width: 15px 10px 0; }
.viewer { height: 1786px; flex: none; position: relative; overflow: hidden; background: linear-gradient(#6a8cd8 0%, #b6c7ec 55%, #ffffff 100%); }
.model { position: absolute; left: 0; top: 0; width: 2788px; height: 1786px; display: block; }
.wire { fill: none; stroke: #1a2a70; stroke-width: 2.4; }
.wire.thin { stroke: #173c3c; stroke-width: 2; }
.wire.cyl { stroke: #0a3a30; stroke-width: 2; }
.wire.blue { stroke: #0a3a6a; }
.sc { font: 28px "Liberation Sans", sans-serif; fill: #1a1a1a; }
.ax { font: bold 32px "Liberation Sans", sans-serif; fill: #2a2a9a; }

.legend { position: absolute; left: 13px; top: 55px; font-family: "Liberation Sans", sans-serif; color: #0c1148; }
.ltitle { font-size: 46px; line-height: 50px; }
.lsub { font-size: 40px; line-height: 36px; }
.lbody { display: flex; margin-top: -3px; }
.lcol { width: 56px; flex: none; padding-top: 33px; }
.lbar { width: 56px; border: 2px solid #0a1a50; }
.seg { height: 78.6px; }
.c1 { background: #ff5500; } .c2 { background: #ffaa00; } .c3 { background: #fff500; } .c4 { background: #aaee00; } .c5 { background: #33dd00; }
.c6 { background: #00dd55; } .c7 { background: #00ddaa; } .c8 { background: #00e5ff; } .c9 { background: #0090ff; } .c10 { background: #0033ff; }
.lunit { font-size: 46px; line-height: 46px; margin-top: 39px; }
.lvals { margin-left: 27px; font-size: 46px; }
.lvals div { height: 79px; line-height: 79px; position: relative; white-space: nowrap; }
.lvals div::before { content: ""; position: absolute; left: -27px; top: 33px; width: 10px; height: 2px; background: #0a1a50; }

.vtabs { flex: 1; display: flex; align-items: flex-start; background: #f0f0f0; border-top: 2px solid #dedede; }
.vtab { height: 44px; display: flex; align-items: center; justify-content: center; background: #ececec; border-right: 2px solid #dcdcdc; border-bottom: 2px solid #dcdcdc; font-size: 27px; color: #333; box-shadow: 0 -2px 0 #a8a8a8; }
.vtab.on { height: 49px; background: #fff; border: 0; box-shadow: none; border-bottom: 2px solid #e2e2e2; }
.v1 { width: 188px; } .v2 { width: 225px; } .v3 { width: 225px; } .v4 { width: 273px; } .v5 { width: 235px; border-right: 0; }
```
